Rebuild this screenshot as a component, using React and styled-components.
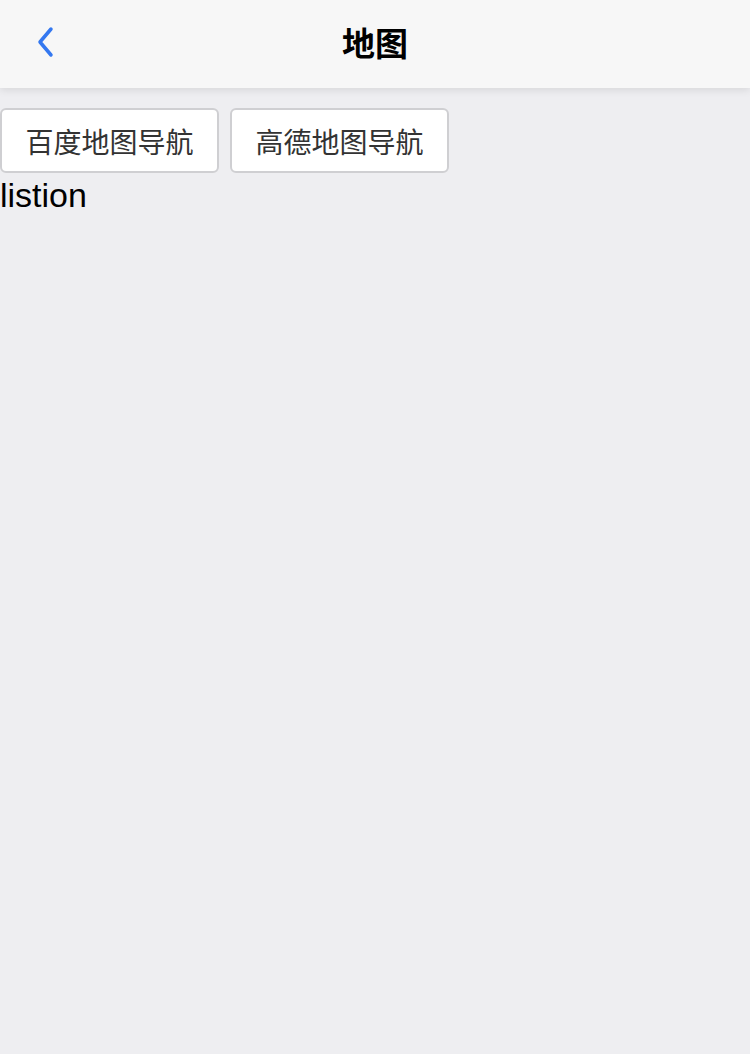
import React from 'react'
import styled, { createGlobalStyle } from 'styled-components'

const GlobalStyle = createGlobalStyle`
    html, body {
        margin: 0;
        padding: 0;
        background: #eeeef1;
        font-family: "Noto Sans CJK SC", "Liberation Sans", sans-serif;
    }
`
const Page = styled.div`
    min-height: 1054px;
    background: #eeeef1;
`
const NavBar = styled.div`
    height: 88px;
    background: #f7f7f7;
    box-shadow: 0 2px 8px rgba(0, 0, 0, 0.1);
    display: flex;
    align-items: center;
    justify-content: center;
    position: relative;
`
const BackButton = styled.div`
    position: absolute;
    left: 30px;
    top: 24px;
    width: 30px;
    height: 36px;
    display: flex;
    align-items: center;
    justify-content: center;
`
const Title = styled.div`
    font-size: 33px;
    font-weight: 700;
    color: #000;
    line-height: 1;
    margin-top: -3px;
`
const ButtonRow = styled.div`
    display: flex;
    gap: 11px;
    padding-top: 20px;
`
const NavButton = styled.button`
    width: 219px;
    height: 65px;
    background: #fff;
    border: 2px solid #cfcfd2;
    border-radius: 6px;
    font-family: "Noto Sans CJK SC", sans-serif;
    font-size: 28px;
    color: #333;
    padding: 0;
`
const Listion = styled.div`
    font-family: "Liberation Sans", "Noto Sans", sans-serif;
    font-size: 34px;
    color: #000;
    line-height: 44px;
    margin-top: 0;
`

export default function App() {
    return (
        <Page>
            <GlobalStyle />
            <NavBar>
                <BackButton>
                    <svg width="20" height="32" viewBox="0 0 20 32">
                        <path d="M16 3 L5 16 L16 29" fill="none" stroke="#3478f0" strokeWidth="3.5" strokeLinecap="round" strokeLinejoin="round" />
                    </svg>
                </BackButton>
                <Title>地图</Title>
            </NavBar>
            <ButtonRow>
                <NavButton>百度地图导航</NavButton>
                <NavButton>高德地图导航</NavButton>
            </ButtonRow>
            <Listion>listion</Listion>
        </Page>
    )
}
